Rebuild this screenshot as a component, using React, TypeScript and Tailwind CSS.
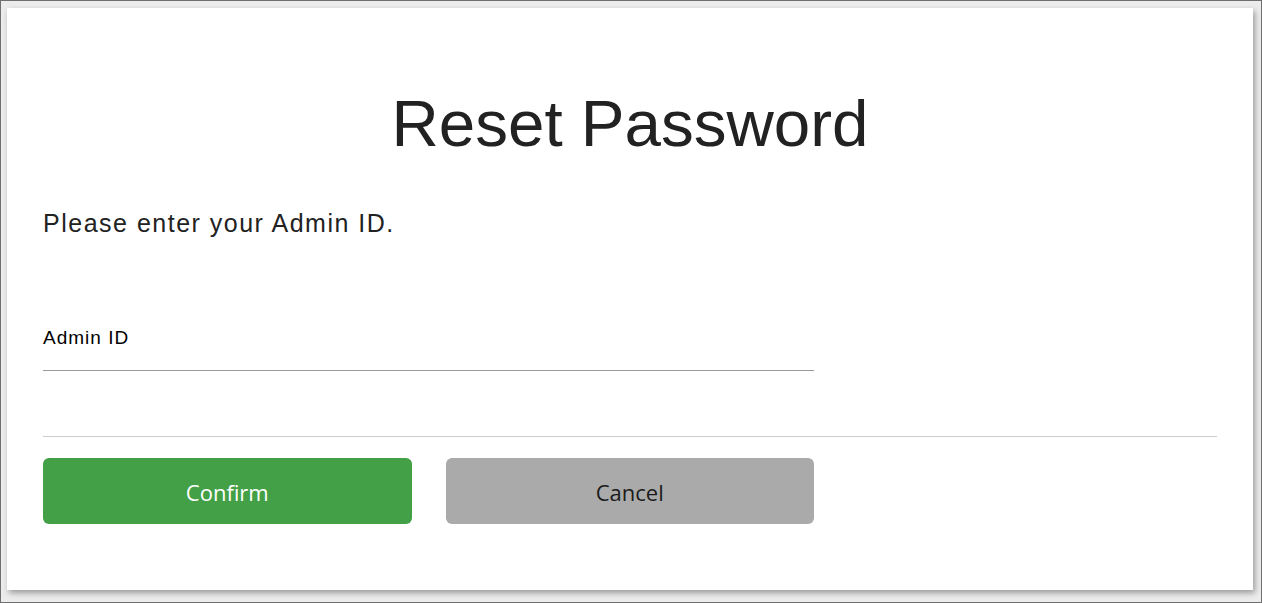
import React from "react";

export default function App() {
  return (
    <div className="h-[603px] w-[1262px] border border-[#6f6f6f] bg-[#ececec] pt-[7px] pl-[6px] pr-[8px] pb-[12px]">
      <div className="flex h-full w-full flex-col bg-white px-[36px] pt-[78px] shadow-[2px_3px_6px_rgba(0,0,0,0.35)]" style={{ fontFamily: '"Liberation Sans", Arial, sans-serif' }}>
        <h1 className="text-center text-[65.5px] leading-[75px] text-[#222222]">Reset Password</h1>
        <p className="mt-[48px] text-[25px] leading-[28px] tracking-[1.5px] text-[#222222]">Please enter your Admin ID.</p>
        <div className="mt-[90px] flex w-[771px] flex-col">
          <label className="text-[19px] leading-[22px] tracking-[1px] text-black">Admin ID</label>
          <input className="h-[22px] border-b border-[#9a9a9a] bg-transparent outline-none" />
        </div>
        <div className="mt-[65px] h-px w-full bg-[#cccccc]" />
        <div className="mt-[21px] grid w-[771px] grid-cols-2 gap-[34px]" style={{ fontFamily: '"Segoe UI", "Open Sans", "Noto Sans", sans-serif' }}>
          <button className="h-[66px] rounded-[6px] bg-[#43a047] pt-[2px] text-[22px] text-white">Confirm</button>
          <button className="h-[66px] rounded-[6px] bg-[#aaaaaa] pt-[2px] text-[22px] text-[#1a1a1a]">Cancel</button>
        </div>
      </div>
    </div>
  );
}
